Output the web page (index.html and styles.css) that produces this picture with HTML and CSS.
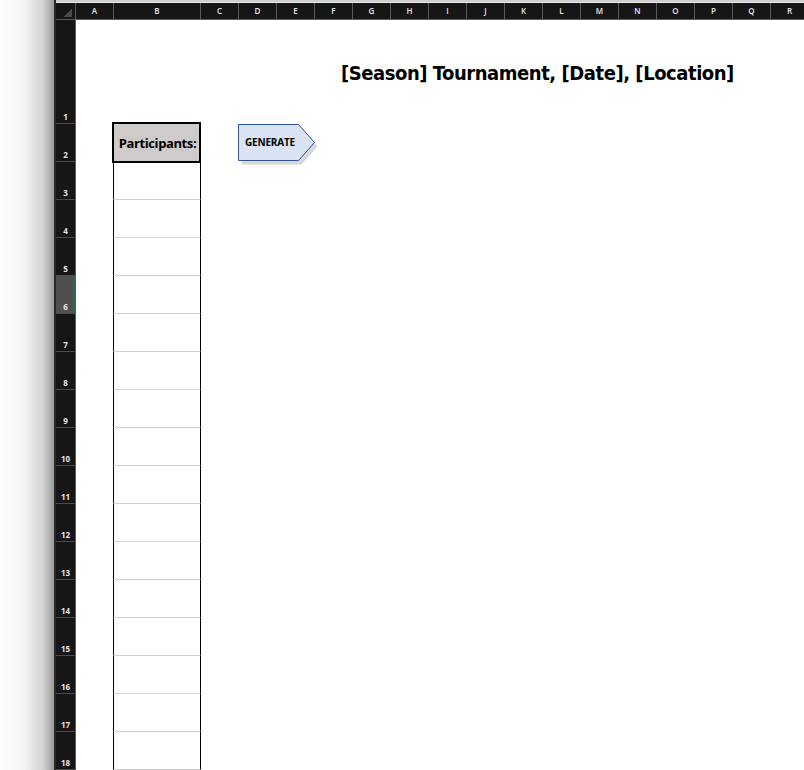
FILE: index.html
```html
<!DOCTYPE html>
<html lang="en">
<head>
  <meta charset="UTF-8">
  <title>Tournament Sheet</title>
  <link rel="stylesheet" href="styles.css">
</head>
<body>
  <div class="app">
    <div class="shade"></div>
    <div class="sheet">
      <div class="topline"></div>
      <div class="colheads">
        <div class="corner"></div>
        <div class="ch">A</div>
        <div class="ch wide">B</div>
        <div class="ch">C</div>
        <div class="ch">D</div>
        <div class="ch">E</div>
        <div class="ch">F</div>
        <div class="ch">G</div>
        <div class="ch">H</div>
        <div class="ch">I</div>
        <div class="ch">J</div>
        <div class="ch">K</div>
        <div class="ch">L</div>
        <div class="ch">M</div>
        <div class="ch">N</div>
        <div class="ch">O</div>
        <div class="ch">P</div>
        <div class="ch">Q</div>
        <div class="ch">R</div>
      </div>
      <div class="body">
        <div class="rowheads">
          <div class="rh first">1</div>
          <div class="rh">2</div>
          <div class="rh">3</div>
          <div class="rh">4</div>
          <div class="rh">5</div>
          <div class="rh sel">6</div>
          <div class="rh">7</div>
          <div class="rh">8</div>
          <div class="rh">9</div>
          <div class="rh">10</div>
          <div class="rh">11</div>
          <div class="rh">12</div>
          <div class="rh">13</div>
          <div class="rh">14</div>
          <div class="rh">15</div>
          <div class="rh">16</div>
          <div class="rh">17</div>
          <div class="rh">18</div>
        </div>
        <div class="cells">
          <h1 class="title">[Season] Tournament, [Date], [Location]</h1>
          <div class="phead">Participants:</div>
          <div class="gen">
            <svg width="82" height="42" viewBox="0 0 82 42">
              <polygon points="4.5,4.5 64.5,4.5 80.5,22.5 64.5,40.5 4.5,40.5" fill="#b8b8b8" opacity="0.55"/>
              <polygon points="1.5,0.5 61.5,0.5 77.5,18.5 61.5,36.5 1.5,36.5" fill="#dae3f3" stroke="#2f5597" stroke-width="1"/>
              <text x="33" y="22" text-anchor="middle">GENERATE</text>
            </svg>
          </div>
          <div class="plist">
            <div class="pcell"></div>
            <div class="pcell"></div>
            <div class="pcell"></div>
            <div class="pcell"></div>
            <div class="pcell"></div>
            <div class="pcell"></div>
            <div class="pcell"></div>
            <div class="pcell"></div>
            <div class="pcell"></div>
            <div class="pcell"></div>
            <div class="pcell"></div>
            <div class="pcell"></div>
            <div class="pcell"></div>
            <div class="pcell"></div>
            <div class="pcell"></div>
            <div class="pcell"></div>
          </div>
        </div>
      </div>
    </div>
  </div>
</body>
</html>
```

FILE: styles.css
```css
body { margin: 0; background: #fff; font-family: "Liberation Sans", Arial, sans-serif; }
.app { display: flex; width: 804px; height: 770px; overflow: hidden; }
.shade { width: 54px; flex: none; background: linear-gradient(to right, #ffffff 0%, #f4f4f4 45%, #d2d2d2 80%, #9c9c9c 100%); border-right: 2px solid #262626; }
.sheet { flex: 1; display: flex; flex-direction: column; min-width: 0; }
.topline { height: 3px; background: linear-gradient(#cfcfcf 0 2px, #eaeaea 2px); }
.colheads { display: flex; height: 16px; background: #161616; border-bottom: 1px solid #5a5a5a; }
.corner { width: 19px; flex: none; border-right: 1px solid #5a5a5a; background: linear-gradient(135deg, transparent 62%, #4a4a4a 62%) no-repeat 4px 3px / 12px 11px; }
.ch { width: 37px; flex: none; border-right: 1px solid #5a5a5a; color: #e6e6e6; font-family: "Open Sans", sans-serif; font-size: 8px; font-weight: 600; text-align: center; line-height: 16px; }
.ch.wide { width: 86px; }
.body { display: flex; flex: 1; }
.rowheads { width: 19px; flex: none; background: #161616; border-right: 1px solid #5a5a5a; }
.rh { height: 38px; border-bottom: 1px solid #4a4a4a; color: #e6e6e6; font-family: "Open Sans", sans-serif; font-size: 8px; font-weight: 700; display: flex; align-items: flex-end; justify-content: center; padding-bottom: 1px; box-sizing: border-box; }
.rh.first { height: 104px; }
.rh.sel { background: #4f4f4f; box-shadow: inset -2px 0 0 #217346; }
.cells { flex: 1; display: grid; grid-template-columns: 38px 87px repeat(16, 38px); grid-template-rows: 104px 38px; align-content: start; }
.title { grid-column: 6 / -1; grid-row: 1; align-self: end; margin: 0 0 39px 26px; font-family: "DejaVu Sans Condensed", "DejaVu Sans", sans-serif; font-weight: bold; font-size: 20px; letter-spacing: -0.45px; color: #000; white-space: nowrap; }
.phead { grid-column: 2; grid-row: 2; margin: -2px 0 -1px -2px; border: 2px solid #000; background: #cfcbcb; font-family: "Open Sans", sans-serif; font-weight: bold; font-size: 13px; letter-spacing: -0.4px; display: flex; align-items: center; justify-content: center; padding-left: 2px; }
.gen { grid-column: 4 / span 3; grid-row: 2; margin: 0 0 0 -2px; }
.gen svg { display: block; }
.gen text { font-family: "Open Sans", sans-serif; font-weight: bold; font-size: 10px; letter-spacing: -0.2px; fill: #000; }
.plist { grid-column: 2; grid-row: 3; display: flex; flex-direction: column; margin-left: -1px; }
.pcell { height: 38px; box-sizing: border-box; border-left: 1px solid #000; border-right: 1px solid #000; border-bottom: 1px solid #d0d0d0; }
```
